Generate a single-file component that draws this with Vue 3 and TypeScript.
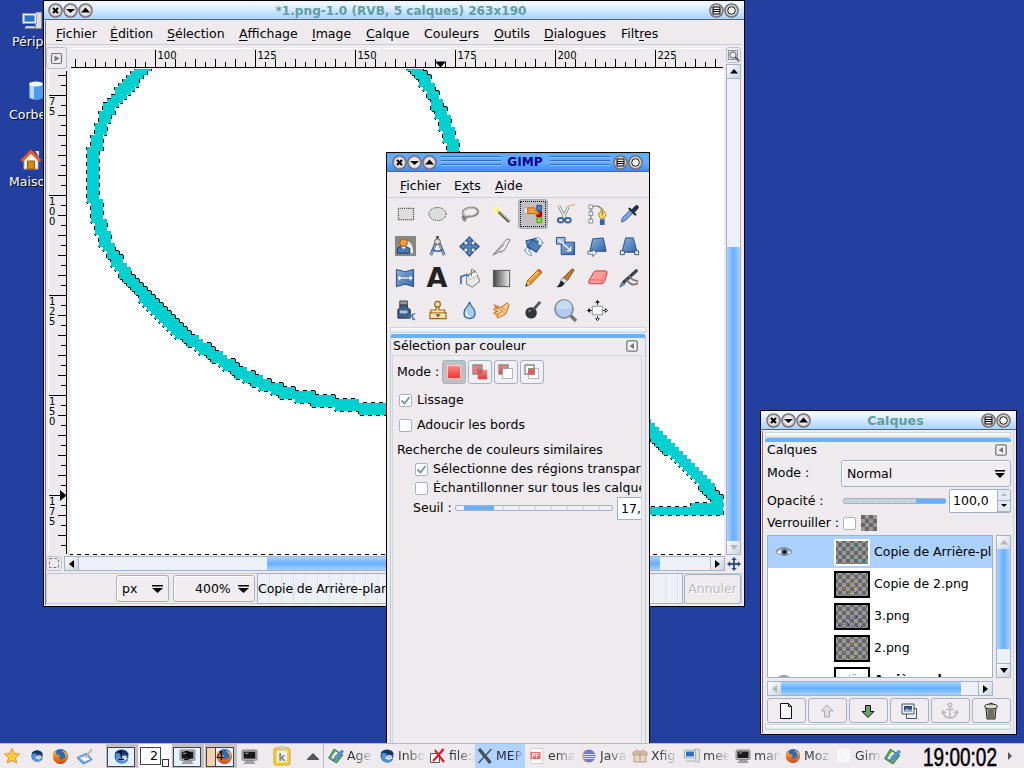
<script setup lang="ts">
type Pt = [number, number]

const menus: [string, string, string][] = [
  ['', 'F', 'ichier'], ['', 'É', 'dition'], ['', 'S', 'élection'], ['', 'A', 'ffichage'], ['', 'I', 'mage'],
  ['', 'C', 'alque'], ['Coule', 'u', 'rs'], ['', 'O', 'utils'], ['', 'D', 'ialogues'], ['Filt', 'r', 'es'],
]
const toolMenus: [string, string, string][] = [['', 'F', 'ichier'], ['E', 'x', 'ts'], ['', 'A', 'ide']]

// Ruler ticks, one every 2.5 image pixels at 400 %
const tickLen = (i: number) => (i % 10 === 0 ? 17 : i % 2 === 0 ? 8 : 5)
const hTicks = Array.from({ length: 65 }, (_, k) => {
  const i = k - 8
  return { x: 85 + i * 10, l: tickLen(Math.abs(i)) }
})
const hLabels = [100, 125, 150, 175, 200, 225]
const vTicks = Array.from({ length: 48 }, (_, k) => {
  const i = k - 2
  return { y: 26 + i * 10, l: tickLen(Math.abs(i)) }
})
const vLabels = ['75', '100', '125', '150', '175']

// Canvas drawing: strokes rasterised on the 4px grid of the zoomed image
const X0 = 70
const Y0 = 69
const strokes: Pt[][] = [
  [[150, 62], [141, 72], [128, 86], [115, 100], [106, 115], [100, 131], [95, 150], [93, 170], [93, 185], [95, 200], [99, 220],
   [105, 240], [116, 260], [130, 280], [149, 301], [183, 335], [218, 358], [240, 373], [260, 383], [287, 393], [317, 400],
   [340, 404], [373, 409], [400, 409]],
  [[410, 62], [418, 71], [427, 83], [435, 99], [444, 119], [451, 140], [455, 156]],
  [[640, 421], [650, 430], [660, 440], [680, 459], [700, 479], [717, 499]],
]
function dist(px: number, py: number, a: Pt, b: Pt): number {
  const dx = b[0] - a[0]
  const dy = b[1] - a[1]
  const t = Math.max(0, Math.min(1, ((px - a[0]) * dx + (py - a[1]) * dy) / (dx * dx + dy * dy)))
  return Math.hypot(px - a[0] - t * dx, py - a[1] - t * dy)
}
const cells = new Set<string>()
for (let cx = 67; cx < 724; cx += 4) {
  for (let cy = 67; cy < 556; cy += 4) {
    const mx = cx + 2
    const my = cy + 2
    let on = my > 507 && my < 515 && mx > 640 && mx < 723
    if (my > 503 && my < 507 && mx > 691) on = true
    if (!on) {
      for (const s of strokes) {
        for (let i = 1; i < s.length && !on; i++) if (dist(mx, my, s[i - 1], s[i]) <= 6.1) on = true
      }
    }
    if (on) cells.add(cx + ',' + cy)
  }
}
const has = (x: number, y: number) => cells.has(x + ',' + y)
let fillPath = ''
let antPath = ''
// Marching ants: black where (x - y) mod 8 falls in the first half of the stripe
const ant = (x: number, y: number, phase = 7) => {
  if (((x - y + 8000 + phase) & 7) < 4) antPath += `M${x - X0} ${y - Y0}h1v1h-1z`
}
cells.forEach((k) => {
  const [x, y] = k.split(',').map(Number)
  fillPath += `M${x - X0} ${y - Y0}h4v4h-4z`
  for (let i = 0; i < 4; i++) {
    if (!has(x - 4, y)) ant(x - 1, y + i)
    if (!has(x + 4, y)) ant(x + 4, y + i)
    if (!has(x, y - 4)) ant(x + i, y - 1)
    if (!has(x, y + 4)) ant(x + i, y + 4)
  }
})
for (let x = 70; x < 724; x++) ant(x, 554, 5)

interface Layer { name: string; color: string; dots: number[][]; sel?: boolean; plain?: boolean }
const layers: Layer[] = [
  { name: 'Copie de Arrière-plan', color: '#00c8c8', sel: true, dots: [[17, 7], [20, 7], [14, 9], [11, 13], [12, 16], [15, 18], [22, 10], [21, 9], [25, 22], [28, 21], [30, 22]] },
  { name: 'Copie de 2.png', color: '#e8c800', dots: [[16, 6], [19, 6], [15, 9], [17, 11], [19, 14], [20, 17], [20, 20], [17, 22], [13, 22], [10, 20], [9, 17], [12, 16]] },
  { name: '3.png', color: '#2010e0', dots: [[4, 22], [8, 21], [12, 19], [14, 16], [17, 14], [21, 13], [25, 15], [27, 18], [13, 21], [17, 22], [22, 23], [26, 23]] },
  { name: '2.png', color: '#e8c800', dots: [[19, 6], [16, 9], [19, 9], [17, 12], [20, 15], [20, 18], [19, 21], [16, 22], [12, 23], [10, 20], [9, 17]] },
  { name: 'Arrière-plan', color: '#00c8c8', plain: true, dots: [[14, 8], [18, 7], [20, 7]] },
]
const tasks = [
  { t: 'Age', i: 'i-pad', w: 51 }, { t: 'Inbox', i: 'i-bird', w: 51 }, { t: 'file:/', i: 'i-redx', w: 49 },
  { t: 'MEPI', i: 'i-x', w: 50, on: true }, { t: 'ema', i: 'i-pdf', w: 52 }, { t: 'Java', i: 'i-ecl', w: 51 },
  { t: 'Xfig', i: 'i-gift', w: 52 }, { t: 'mee', i: 'i-pc', w: 51 }, { t: 'man', i: 'i-term', w: 50 },
  { t: 'Moz', i: 'i-fox', w: 51 }, { t: 'Gim', i: 'i-none', w: 50 },
]
</script>

<template>
  <div class="desktop">
    <svg class="defs" width="0" height="0">
      <defs>
        <pattern id="chk" width="8" height="8" patternUnits="userSpaceOnUse"><rect width="8" height="8" fill="#999" /><path d="M0 0h4v4H0zM4 4h4v4H4z" fill="#666" /></pattern>
        <linearGradient id="blue" x1="0" y1="0" x2="1" y2="1"><stop offset="0" stop-color="#8fb4dc" /><stop offset="1" stop-color="#3465a4" /></linearGradient>
        <linearGradient id="grey" x1="0" y1="0" x2="1" y2="0"><stop offset="0" stop-color="#444" /><stop offset="1" stop-color="#eee" /></linearGradient>
        <linearGradient id="red" x1="0" y1="0" x2="0" y2="1"><stop offset="0" stop-color="#ff8a8a" /><stop offset="1" stop-color="#f43030" /></linearGradient>
        <linearGradient id="org" x1="0" y1="0" x2="0" y2="1"><stop offset="0" stop-color="#ffb030" /><stop offset="1" stop-color="#d84a08" /></linearGradient>
        <radialGradient id="orb"><stop offset="0" stop-color="#fff" /><stop offset=".65" stop-color="#e4e2e4" /><stop offset="1" stop-color="#a09a9e" /></radialGradient>
      </defs>
      <symbol id="b-x" viewBox="0 0 15 15"><circle cx="7.5" cy="7.5" r="6.7" fill="url(#orb)" stroke="#6b6468" stroke-width="1.1" /><path d="M5 5l5 5M10 5l-5 5" stroke="#000" stroke-width="2.2" /></symbol>
      <symbol id="b-d" viewBox="0 0 15 15"><circle cx="7.5" cy="7.5" r="6.7" fill="url(#orb)" stroke="#6b6468" stroke-width="1.1" /><path d="M3 6h9l-4.500 4z" /></symbol>
      <symbol id="b-u" viewBox="0 0 15 15"><circle cx="7.5" cy="7.5" r="6.7" fill="url(#orb)" stroke="#6b6468" stroke-width="1.1" /><path d="M3 9.500h9l-4.500-5z" /></symbol>
      <symbol id="b-m" viewBox="0 0 15 15"><circle cx="7.5" cy="7.5" r="6.7" fill="url(#orb)" stroke="#6b6468" stroke-width="1.1" /><path d="M4 4h7v7H4zM4 6.500h7M4 8.500h7" fill="none" stroke="#000" /></symbol>
      <symbol id="b-o" viewBox="0 0 15 15"><circle cx="7.5" cy="7.5" r="6.7" fill="url(#orb)" stroke="#6b6468" stroke-width="1.1" /><circle cx="7.5" cy="7.500" r="3.800" fill="#fff" stroke="#111" /></symbol>
      <symbol id="i-tab" viewBox="0 0 12 12"><rect x=".8" y=".8" width="10.400" height="10.400" rx="1.500" fill="#f6f4f6" stroke="#777" stroke-width="1.300" /><path d="M8 3v6L3.500 6z" fill="#777" /></symbol>
      <symbol id="i-move" viewBox="0 0 20 20"><path d="M10 0.700l3.600 4h-2.100v3.800h3.800V6.400l4 3.600-4 3.600v-2.100h-3.800v3.800h2.100L10 19.300l-3.600-4h2.100v-3.800H4.700v2.100L.7 10l4-3.600v2.100h3.800V4.700H6.400z" fill="#5e8cc4" stroke="#204a87" /></symbol>
      <symbol id="i-movedark" viewBox="0 0 15 15"><path d="M7.500 0l3 3.300h-2v3.200h3.200v-2L15 7.500l-3.300 3v-2H8.500v3.200h2l-3 3.300-3-3.300h2V8.500H3.300v2L0 7.500l3.300-3v2h3.200V3.300h-2z" fill="#2c4f8c" /></symbol>
      <symbol id="i-bird" viewBox="0 0 16 16"><circle cx="8" cy="8" r="6.500" fill="#2b5ba4" /><path d="M2 4Q7 0 13 3l2 3-3 1Q6 3 3 9z" fill="#163468" /><path d="M3 5Q8 4 8 10l4 2 2-3v3q-3 4-8 2-5-3-3-9" fill="#4f93d8" /><path d="M7 8l5-1 1.500 3-3 2-4-1.500z" fill="#f2ead8" /><path d="M7.500 8.500l3 1.500 1.500-2" fill="none" stroke="#8b8171" stroke-width=".7" /></symbol>
      <symbol id="i-fox" viewBox="0 0 16 16"><circle cx="8" cy="8" r="7" fill="#3068b8" /><path d="M1.500 3Q0 8 2 12q5 5 10 1.500 4-4 2.500-9L13 3q1 4-1 6-3 3-5.500.500L8 8 6 6 4 6 4 4z" fill="url(#org)" /><path d="M10 3q3 1 3 4" stroke="#ffd040" fill="none" /></symbol>
      <symbol id="i-term" viewBox="0 0 16 16"><rect x="1" y="2" width="14" height="9.500" rx="1" fill="#bbb" stroke="#888" /><rect x="2.500" y="3.500" width="11" height="6.500" fill="#181818" /><path d="M5 12h6l2 2.500H3z" fill="#aaa" stroke="#777" stroke-width=".6" /><path d="M4 5h3" stroke="#ddd" stroke-width=".8" /></symbol>
      <symbol id="i-pc" viewBox="0 0 16 16"><rect x="11" y="1" width="4.500" height="13" fill="#ddd" stroke="#999" stroke-width=".6" /><rect x=".5" y="2" width="11" height="8" fill="#eee" stroke="#999" stroke-width=".7" /><rect x="2" y="3.500" width="8" height="5" fill="#2a6fc8" /><path d="M3 12h7l1 2H2z" fill="#ccc" /></symbol>
      <symbol id="i-pad" viewBox="0 0 16 16"><path d="M.5 10L6 1l9 6-6.500 8z" fill="#5bab63" stroke="#23703b" stroke-width=".8" /><path d="M3.500 9.500l4-6 4.500 3-4.500 6z" fill="#fff" /><path d="M5 13l2-5 7-6 1.500 1.700L8.500 11z" fill="#5a97dc" stroke="#285c9c" stroke-width=".6" /></symbol>
      <symbol id="i-redx" viewBox="0 0 16 16"><path d="M.5 5.500h9v9h-9z" fill="#fff" stroke="#555" /><path d="M3 13Q8 8 13.500 1M5 2q4 6 9 12" stroke="#e01820" stroke-width="2.200" fill="none" /></symbol>
      <symbol id="i-x" viewBox="0 0 16 16"><path d="M2 1L13.500 15" stroke="#454f5a" stroke-width="3.400" /><path d="M14.500 1L1.500 15" stroke="#454f5a" stroke-width="1.300" /></symbol>
      <symbol id="i-pdf" viewBox="0 0 16 16"><path d="M2 .5h12v15H2z" fill="#fff" stroke="#dcc" /><path d="M1.500 4h10v7h-10z" fill="#e76d6d" /><path d="M3.500 9.500V5.500h2.500v2H4m3.500 2v-4H10M7.500 7.500h2" stroke="#fff" fill="none" /></symbol>
      <symbol id="i-ecl" viewBox="0 0 16 16"><circle cx="8" cy="8" r="6.500" fill="#7779c5" /><path d="M2 6.500h12M1.500 8.500h13M2 10.500h12" stroke="#d6d8f5" /><path d="M4 2q-4 6 0 12" stroke="#eda35a" fill="none" /></symbol>
      <symbol id="i-gift" viewBox="0 0 16 16"><path d="M2 6h12v8H2zM1 4h14v3H1z" fill="#e4d8c4" stroke="#b7a08a" /><path d="M8 4v10M8 4Q3 0 4 4M8 4q5-4 4 0" stroke="#d88" fill="none" /></symbol>
      <symbol id="i-none" viewBox="0 0 16 16"><rect x="1" y="1" width="13" height="13" fill="#f8f7f8" /><path d="M4 4l1 1M8 10l1 1" stroke="#b8e6e6" /></symbol>
      <symbol id="i-house" viewBox="0 0 22 22"><path d="M4 11v9h14v-9l-7-7z" fill="#fff6e4" stroke="#c9a88a" /><path d="M1.500 12L11 2.500 20.500 12" fill="none" stroke="#ef5326" stroke-width="3" /><path d="M15 2h4v6z" fill="#ddd" /><path d="M7.500 12h7v8h-7z" fill="#d88b12" stroke="#8c5a10" /></symbol>
      <symbol id="i-eye" viewBox="0 0 18 12"><path d="M1 6.500Q8-1 17 6.500 9 12 1 6.500z" fill="#fff" stroke="#8b8b8b" /><circle cx="9.500" cy="6" r="3.500" fill="#527daf" /><circle cx="9.500" cy="6" r="1.800" fill="#111" /><path d="M1 5Q8-2 17 5" stroke="#777" fill="none" /></symbol>
    </svg>

    <div class="shortcut s1"><svg width="22" height="20"><use href="#i-pc" /></svg><span>Périphériques</span></div>
    <div class="shortcut s2"><svg width="18" height="22" viewBox="0 0 18 22"><path d="M2 4v14q7 4 14 0V4z" fill="#4d9af0" /><path d="M3 5v13l4 1V6z" fill="#b8dcff" /><ellipse cx="9" cy="4" rx="7" ry="2.500" fill="#eef7ff" /></svg><span>Corbeille</span></div>
    <div class="shortcut s3"><svg width="22" height="22"><use href="#i-house" /></svg><span>Maison</span></div>

    <!-- Image window -->
    <section class="win image-win">
      <header class="title pale">
        <svg v-for="b in ['x', 'd', 'u']" :key="b" width="15" height="15"><use :href="'#b-' + b" /></svg>
        <h1>*1.png-1.0 (RVB, 5 calques) 263x190</h1>
        <svg v-for="b in ['m', 'o']" :key="b" width="15" height="15"><use :href="'#b-' + b" /></svg>
      </header>
      <div class="image-body">
        <nav class="menubar"><span v-for="m in menus" :key="m[2]">{{ m[0] }}<u>{{ m[1] }}</u>{{ m[2] }}</span></nav>
        <div class="work">
          <div class="corner"><svg width="20" height="21" viewBox="0 0 20 21"><rect x="4.500" y="5.500" width="10" height="10" rx="1.500" fill="none" stroke="#777" stroke-width="1.200" /><path d="M7.500 7.500v6l5-3z" fill="#777" /></svg></div>
          <svg class="hruler" width="654" height="22">
            <rect x="1" y="2" width="652" height="18" fill="#eeeaee" /><path d="M1 1.500h652" stroke="#fff" />
            <g class="px"><rect v-for="t in hTicks" :key="t.x" :x="t.x" :y="20 - t.l" width="1" :height="t.l" /><rect x="1" y="20" width="652" height="1" /></g>
            <text v-for="(l, i) in hLabels" :key="l" :x="87.500 + i * 100" y="12">{{ l }}</text>
            <path d="M365 14.500h11l-5.500 6z" />
          </svg>
          <div class="zoombtn"><svg width="13" height="13" viewBox="0 0 13 13"><path d="M1.500 1.500h9v9h-9z" fill="none" stroke="#336" stroke-dasharray="1 1" /><circle cx="6" cy="6" r="3" fill="#eee" stroke="#888" stroke-width="1.300" /><path d="M8 8l4 4" stroke="#666" stroke-width="2" /></svg></div>

          <svg class="vruler" width="24" height="486">
            <path d="M2.500 1v484" stroke="#fff" />
            <g class="px"><rect v-for="t in vTicks" :key="t.y" :x="20 - t.l" :y="t.y" :width="t.l" height="1" /><rect x="20" y="2" width="1" height="483" /></g>
            <g v-for="(l, i) in vLabels" :key="l"><text v-for="(c, j) in l.split('')" :key="j" x="3" :y="36 + i * 100 + j * 10">{{ c }}</text></g>
            <path d="M14 421v11l6.500-5.500z" />
          </svg>
          <svg class="canvas px" width="654" height="486"><rect width="654" height="486" fill="#fff" /><path :d="fillPath" fill="#00d0d0" /><path :d="antPath" /></svg>
          <div class="sb v">
            <i class="ar"><svg width="8" height="5"><path d="M0 4.500h8L4 0z" /></svg></i><b class="trough" /><b class="thumb" /><i class="ar off"><svg width="8" height="5"><path d="M0 0h8L4 5z" /></svg></i>
          </div>
          <div class="hrow">
            <div class="qmask"><svg width="11" height="11"><path d="M.5.500h9v9h-9z" fill="none" stroke="#777" stroke-dasharray="3 2" /></svg></div>
            <div class="sb h main">
              <i class="ar"><svg width="5" height="8"><path d="M5 0v8L0 4z" /></svg></i><b class="trough a" /><b class="thumb" /><b class="trough c" /><i class="ar"><svg width="5" height="8"><path d="M0 0v8l5-4z" /></svg></i>
            </div>
            <svg width="14" height="14"><use href="#i-movedark" /></svg>
          </div>
        </div>
        <footer class="status">
          <div class="combo px-unit"><span>px</span><svg width="11" height="8"><path d="M0 0h11v1.500H0zM0 3h11L5.500 8z" /></svg></div>
          <div class="combo pct"><span>400%</span><svg width="11" height="8"><path d="M0 0h11v1.500H0zM0 3h11L5.500 8z" /></svg></div>
          <div class="progress">Copie de Arrière-plan (1,3 Mo)</div>
          <div class="cancel">Annuler</div>
        </footer>
      </div>
    </section>

    <!-- Toolbox window -->
    <section class="win tool-win">
      <header class="title active">
        <svg v-for="b in ['x', 'd', 'u']" :key="b" width="15" height="15"><use :href="'#b-' + b" /></svg>
        <em /><h1>GIMP</h1><em />
        <svg v-for="b in ['m', 'o']" :key="b" width="15" height="15"><use :href="'#b-' + b" /></svg>
      </header>
      <nav class="menubar tm"><span v-for="m in toolMenus" :key="m[2]">{{ m[0] }}<u>{{ m[1] }}</u>{{ m[2] }}</span></nav>
      <div class="tools">
        <i><svg viewBox="0 0 22 22"><rect x="3.500" y="4.500" width="16" height="12" fill="#dcdedc" stroke="#111" stroke-dasharray="1 1" /></svg></i>
        <i><svg viewBox="0 0 22 22"><ellipse cx="11" cy="10.500" rx="9" ry="6.800" fill="#dcdedc" stroke="#222" stroke-dasharray="1 1" /></svg></i>
        <i><svg viewBox="0 0 22 22"><path d="M6 13Q1 7 9 4.500t11 3Q20 12 12 13t-7-1q-2 4 2 6" fill="none" stroke="#888a85" stroke-width="2.200" /><path d="M6 13Q2 7 9 4.800t10 2.700Q18 11 12 12.500" fill="none" stroke="#ddd" stroke-width=".8" /><path d="M3 13l5 3" stroke="#777" stroke-width="2" /></svg></i>
        <i><svg viewBox="0 0 22 22"><circle cx="6.500" cy="6.500" r="4.500" fill="#fff8b8" /><path d="M7 7l12 11.500" stroke="#555" stroke-width="3" /><path d="M8 7l11 10.500" stroke="#c8caa0" stroke-width="1.200" /><path d="M5 5.500l3 3" stroke="#fdf08a" stroke-width="3" /></svg></i>
        <i class="on"><svg viewBox="0 0 22 22"><path d="M14.500 1.500h5v5h-5z" fill="#5c82b4" stroke="#204a87" /><path d="M14.500 8h5v5h-5z" fill="#d40000" stroke="#800" /><path d="M14.500 14.500h5v5h-5z" fill="#8ae234" stroke="#4e9a06" /><path d="M1 4h4v6H1z" fill="#eee" stroke="#999" stroke-width=".8" /><path d="M5 4l7 0 1 3 4 2-1 2-5-1-6 0z" fill="#f7a040" stroke="#ce5c00" /></svg></i>
        <i><svg viewBox="0 0 22 22"><path d="M4 2l7 13M14 3L8 15" stroke="#888a85" stroke-width="3" /><path d="M4 2l7 13M14 3L8 15" stroke="#fff" stroke-width="1.200" /><ellipse cx="6" cy="17" rx="3" ry="2.300" fill="none" stroke="#3465a4" stroke-width="2" /><ellipse cx="13.500" cy="17" rx="3" ry="2.300" fill="none" stroke="#3465a4" stroke-width="2" /><path d="M14 3q1-2 3-2h4" fill="none" stroke="#d08000" stroke-dasharray="2 1" /></svg></i>
        <i><svg viewBox="0 0 22 22"><path d="M4 3v16M4 3q10-3 12 4" fill="none" stroke="#777" stroke-width="1.200" /><path d="M2 1h4v4H2zM2 8h4v4H2zM2 16h4v4H2z" fill="#fff" stroke="#888" /><path d="M16 5l4 6-2 4h-4l-2-4z" fill="#fbe07a" stroke="#b58900" /><path d="M16 7v5" stroke="#555" /><path d="M13.500 16h5v6h-5z" fill="#3465a4" /></svg></i>
        <i><svg viewBox="0 0 22 22"><path d="M3 19q-1-3 1-5L12 6l3 3-8 8q-2 1-4 2z" fill="#7ba7dc" stroke="#3a6296" /><path d="M11 5l6 6" stroke="#222e3d" stroke-width="2.500" stroke-linecap="round" /><path d="M15 7l3.500-3.500" stroke="#222e3d" stroke-width="4.500" stroke-linecap="round" /></svg></i>

        <i><svg viewBox="0 0 22 22"><rect width="22" height="21" fill="#888882" /><path d="M12 5q7 1 7 13h-7z" fill="#eee" /><path d="M2.500 18v-5q2-2 6-2t7 2v5z" fill="#4a7ab8" stroke="#17335a" /><path d="M6 11l3 3 3-3z" fill="#eee" /><circle cx="9" cy="7" r="4" fill="#f39a3c" stroke="#a8560c" /></svg></i>
        <i><svg viewBox="0 0 22 22"><circle cx="11" cy="6" r="3" fill="#ddd" stroke="#555" /><path d="M11 0v3M9 8L4 20M13 8l5 12" stroke="#555" stroke-width="3" /><path d="M9 9L4 20M13 9l5 11" stroke="#8fb4dc" stroke-width="1.500" /><path d="M5 14q6 4 12 0" fill="none" stroke="#3465a4" stroke-width="1.500" /></svg></i>
        <i><svg viewBox="0 0 20 20"><use href="#i-move" /></svg></i>
        <i><svg viewBox="0 0 22 22"><path d="M2 20L17 3l3 1-6 11-6 2z" fill="#eee" stroke="#777" /><path d="M2 20L14 9" stroke="#777" /><path d="M7 15l5 3" stroke="#999" /></svg></i>
        <i><svg viewBox="0 0 22 22"><path d="M4 3.500h12v9H4z" transform="rotate(-14 10 8)" fill="#6f9ad0" stroke="#204a87" /><path d="M6 6h11v9H6z" transform="rotate(35 12 11)" fill="#4f7db8" stroke="#204a87" /><path d="M1 15l3.500-3 3.500 3H6q0 3 3 3.500v2Q3 20 3 15z" fill="#fff" stroke="#3b6daa" stroke-width=".7" /><path d="M21.500 7L18 10l-3.500-3h2q0-3-3-3.500v-2q6 .5 6 5.500z" fill="#fff" stroke="#3b6daa" stroke-width=".7" /></svg></i>
        <i><svg viewBox="0 0 22 22"><path d="M6.500 6.500h14v13h-14z" fill="url(#blue)" stroke="#204a87" /><path d="M1.500 1.500h9v7h-9z" fill="#9fc0e8" stroke="#204a87" /><path d="M4 4l12 11M12 15.500h4.500V11" fill="none" stroke="#fff" stroke-width="1.300" /></svg></i>
        <i><svg viewBox="0 0 22 22"><path d="M6 3l11-1 3 14H3z" fill="url(#blue)" stroke="#204a87" /><path d="M1 16h5v-2.500l4 4-4 4V19H1z" fill="#fff" stroke="#204a87" stroke-width=".8" /></svg></i>
        <i><svg viewBox="0 0 22 22"><path d="M7 2h8l4 15H3z" fill="url(#blue)" stroke="#204a87" /><path d="M1.500 15.500h4v4h-4zM16.500 15.500h4v4h-4z" fill="#fff" stroke="#204a87" /></svg></i>

        <i><svg viewBox="0 0 22 22"><path d="M1.500 1.500l9 2.500 9-2.500v18l-9-2.500-9 2.500z" fill="url(#blue)" stroke="#204a87" /><path d="M2 10.500l4-4v3h9v-3l4 4-4 4v-3H6v3z" fill="#fff" stroke="#3465a4" stroke-width=".6" /></svg></i>
        <i><span class="biga">A</span></i>
        <i><svg viewBox="0 0 22 22"><path d="M8 8l9-5 5 11-8 6-6-3z" fill="#e8e8e8" stroke="#777" /><path d="M9 8l8-4 3 3-8 5z" fill="#fff" stroke="#999" stroke-width=".7" /><path d="M2 17V9l6-2 3 1" fill="none" stroke="#4a7ab4" stroke-width="2" /><path d="M13 1v8M13 2q3-2 3 3" fill="none" stroke="#777" /></svg></i>
        <i><svg viewBox="0 0 22 22"><rect x="2.500" y="2.500" width="17" height="17" fill="url(#grey)" stroke="#555" /></svg></i>
        <i><svg viewBox="0 0 22 22"><path d="M3 19l2-6L16 1.500l3.500 3.500L8 17z" fill="#e9a22f" stroke="#8f5902" /><path d="M15 2.500L17 1l3 3-1.500 1.500z" fill="#ee4040" /><path d="M3 19l2-6 3 4z" fill="#f5dfb5" stroke="#8f5902" stroke-width=".6" /><path d="M3 19l.8-2.500 1.200 1.500z" /><path d="M6 13L16 3" stroke="#fcd88a" /></svg></i>
        <i><svg viewBox="0 0 22 22"><path d="M9 10l9-9 2 1-7 11z" fill="#c67c2c" stroke="#7a4608" /><path d="M8 10l5 3-3 3-4-3z" fill="#ddd" stroke="#777" stroke-width=".7" /><path d="M6 13l4 3q-2 5-9 4 3-1 5-7z" fill="#222" /></svg></i>
        <i><svg viewBox="0 0 22 22"><path d="M7 4.500Q8 3 10 3h9q2.500 0 2 2.500L18.500 14q-1 2.500-3 2.500H3.500Q1 16.500 2 13.500z" fill="#f4a0a0" stroke="#c83838" /><path d="M2 12.500h12q1.500 0 2-1.500l4.500-7M15 12.500l1 3.500" fill="none" stroke="#e86464" /></svg></i>
        <i><svg viewBox="0 0 22 22"><path d="M5 15L18 3" stroke="#3f4444" stroke-width="3.500" stroke-linecap="round" /><path d="M10 8l4 4 6 2M8 12q5 8 12 4" fill="none" stroke="#777" stroke-width="1.800" /><path d="M1 20l2-5 3 2z" fill="#7da7dc" stroke="#3465a4" /></svg></i>

        <i><svg viewBox="0 0 22 22"><path d="M5 5h8v3l3 2v9H3v-9l2-2z" fill="#415f86" stroke="#263447" /><path d="M5 1h8v4H5z" fill="#999" stroke="#444" /><path d="M5 11h8v3H5z" fill="#a9c4e6" /><path d="M14 19l7-5M15 15l6 6M18 14l1 7" stroke="#4a7ab4" stroke-width="1.300" /></svg></i>
        <i><svg viewBox="0 0 22 22"><circle cx="11" cy="4.500" r="3" fill="#fce2a8" stroke="#9b6612" stroke-width="1.300" /><path d="M9.500 7.500h3v3h6v3h1.500v6H3v-6h1v-3h5.500z" fill="#fce2a8" stroke="#9b6612" stroke-width="1.200" /><path d="M4 13.500h14" stroke="#9b6612" /><path d="M9 15h5l-2.500 3z" fill="#553" /></svg></i>
        <i><svg viewBox="0 0 22 22"><path d="M11 2q1 4 5 8 3 9-5 9.500Q3 19 6 10q4-4 5-8z" fill="#a8cbf0" stroke="#3465a4" stroke-width="1.200" /><path d="M8 12q-1 5 3 5.500" fill="none" stroke="#fff" stroke-width="1.400" /></svg></i>
        <i><svg viewBox="0 0 22 22"><path d="M3 5l7 3 7-5 2 2-2 6q-1 5-6 6l-4 2-1-2 2-2-4 0-1-2 4-1-4-2 1-2 4 1-4-3z" fill="#f9c990" stroke="#b06a14" /><path d="M9 9l4 4M11 7l4 4M8 14l4-2" stroke="#b06a14" fill="none" stroke-width=".8" /></svg></i>
        <i><svg viewBox="0 0 22 22"><circle cx="8.500" cy="13.500" r="6" fill="#333" /><path d="M11 10l7-8" stroke="#555" stroke-width="3" /><circle cx="7" cy="11.500" r="1.500" fill="#777" /></svg></i>
        <i><svg class="mag" viewBox="0 0 24 24"><path d="M17 17l6 6" stroke="#777" stroke-width="3.500" /><circle cx="11" cy="11" r="9" fill="#b0cdf0" stroke="#8a9299" stroke-width="1.800" /><path d="M3 10q8 3 16-1 0-6-8-7-8 2-8 8" fill="#cfe2f7" opacity=".7" /></svg></i>
        <i><svg viewBox="0 0 22 22"><path d="M5.500 6.500h11v9h-11z" fill="#f8f8f8" stroke="#888" /><path d="M11 0l2.500 3h-5zM11 22l2.500-3h-5zM0 11l3-2.500v5zM22 11l-3-2.500v5zM10.500 1h1v4h-1zM10.500 17h1v4h-1zM1 10.500h4v1H1zM17 10.500h4v1h-4z" /></svg></i>
      </div>
      <div class="handle" />
      <div class="dock">
        <div class="dock-title"><span>Sélection par couleur</span><svg width="12" height="12"><use href="#i-tab" /></svg></div>
        <div class="opts">
          <div class="modes"><span>Mode :</span>
            <i class="on"><svg width="16" height="16"><path d="M1.500 1.500h13v13h-13z" fill="url(#red)" stroke="#fff" stroke-dasharray="1 1" /></svg></i>
            <i><svg width="16" height="16"><path d="M5.500 5.500h10v10h-10z" fill="url(#red)" stroke="#fff" stroke-dasharray="1 1" /><path d="M1 1h9v9H1z" fill="#f77" stroke="#888" stroke-width="1.300" /><path d="M5 5h5v5H5z" fill="#f44" stroke="#888" /></svg></i>
            <i><svg width="16" height="16"><path d="M1 1h9v9H1z" fill="url(#red)" stroke="#888" stroke-width="1.300" /><path d="M4.500 4.500h10v10h-10z" fill="#fff" stroke="#777" stroke-dasharray="1 1" /></svg></i>
            <i><svg width="16" height="16"><path d="M1 1h9v9H1z" fill="#fff" stroke="#888" stroke-width="1.300" /><path d="M4.500 4.500h10v10h-10z" fill="#fff" stroke="#777" stroke-dasharray="1 1" /><path d="M4.500 4.500h6v6h-6z" fill="#f55" stroke="#888" /></svg></i>
          </div>
          <div class="opt o1"><i class="cb"><svg width="11" height="11"><path d="M1.500 5.500l3 3L9.500 2" /></svg></i>Lissage</div>
          <div class="opt o2"><i class="cb" />Adoucir les bords</div>
          <div class="opt o3">Recherche de couleurs similaires</div>
          <div class="opt o4"><i class="cb"><svg width="11" height="11"><path d="M1.500 5.500l3 3L9.500 2" /></svg></i>Sélectionne des régions transparentes</div>
          <div class="opt o5"><i class="cb" />Échantillonner sur tous les calques</div>
          <div class="opt o6"><span>Seuil :</span><b class="slider"><b class="knob" /></b><b class="entry">17,0</b></div>
        </div>
      </div>
    </section>

    <!-- Layers window -->
    <section class="win layer-win">
      <header class="title pale">
        <svg v-for="b in ['x', 'd', 'u']" :key="b" width="15" height="15"><use :href="'#b-' + b" /></svg>
        <h1>Calques</h1>
        <svg v-for="b in ['m', 'o']" :key="b" width="15" height="15"><use :href="'#b-' + b" /></svg>
      </header>
      <div class="layer-body">
        <div class="handle" />
        <div class="bar" />
        <div class="lr r0"><span>Calques</span><svg width="12" height="12"><use href="#i-tab" /></svg></div>
        <div class="lr r1"><span>Mode :</span><div class="combo wide"><span>Normal</span><svg width="10" height="8"><path d="M0 0h10v1.500H0zM0 3h10L5 8z" /></svg></div></div>
        <div class="lr r2"><span>Opacité :</span><b class="slider full"><b class="knob" /></b><div class="spin"><b>100,0</b><em><i class="off"><svg width="6" height="3"><path d="M0 3h6L3 0z" /></svg></i><i><svg width="6" height="3"><path d="M0 0h6L3 3z" /></svg></i></em></div></div>
        <div class="lr r3"><span>Verrouiller :</span><i class="cb" /><svg width="16" height="16"><rect width="16" height="16" fill="url(#chk)" /></svg></div>
        <div class="listrow">
          <div class="list">
            <div v-for="l in layers" :key="l.name" class="layer" :class="{ sel: l.sel, bold: l.plain }">
              <div class="eye"><svg v-if="l.sel || l.plain" width="18" height="12"><use href="#i-eye" /></svg></div>
              <svg class="thumb-img px" width="36" height="27">
                <rect width="36" height="27" :fill="l.sel ? '#fff' : '#000'" /><rect x="2" y="2" width="32" height="23" :fill="l.plain ? '#fff' : 'url(#chk)'" />
                <rect v-for="(d, i) in l.dots" :key="i" :x="d[0] + 1" :y="d[1]" width="1" height="1" :fill="l.color" />
              </svg>
              <span>{{ l.name }}</span>
            </div>
          </div>
          <div class="sb v ls">
            <i class="ar off"><svg width="8" height="5"><path d="M0 4.500h8L4 0z" /></svg></i><b class="thumb" /><b class="trough" /><i class="ar"><svg width="8" height="5"><path d="M0 0h8L4 5z" /></svg></i>
          </div>
        </div>
        <div class="sb h lh">
          <i class="ar off"><svg width="5" height="8"><path d="M5 0v8L0 4z" /></svg></i><b class="thumb" /><b class="trough" /><i class="ar"><svg width="5" height="8"><path d="M0 0v8l5-4z" /></svg></i>
        </div>
        <div class="lbtns">
          <i><svg width="18" height="18"><path d="M3.500 1.500h8l3 3v12h-11z" fill="#fafafa" stroke="#111" /><path d="M11.500 1.500v3h3" fill="none" stroke="#111" /></svg></i>
          <i><svg width="18" height="18"><path d="M9 3l6 6h-3.500v6h-5V9H3z" fill="#ddd" stroke="#aaa" /></svg></i>
          <i><svg width="18" height="18"><path d="M9 15.500l6-6h-3.500v-6h-5v6H3z" fill="#6fa06f" stroke="#111" /></svg></i>
          <i><svg width="18" height="18"><path d="M6.500 6.500h10v10h-10z" fill="#eee" stroke="#456" /><path d="M2 2h12v10H2z" fill="#eee" stroke="#456" /><path d="M4 4h8v6H4z" fill="#2c4f80" /><path d="M4 9l3-3 2 2 2-1 1 2v1H4z" fill="#9db4d0" /></svg></i>
          <i><svg width="18" height="18"><circle cx="9" cy="3" r="1.800" fill="none" stroke="#bbb" stroke-width="1.500" /><path d="M9 5v11M5 7.500h8M2 10q1 6 7 6t7-6M1 12l1-3 3 2M17 12l-1-3-3 2" fill="none" stroke="#bbb" stroke-width="1.600" /></svg></i>
          <i><svg width="18" height="18"><path d="M4 6h10l-1 11H5z" fill="#aaa89a" stroke="#222" /><path d="M7 8v8M9 8v8M11 8v8" stroke="#333" /><ellipse cx="9" cy="4.500" rx="6.500" ry="2.500" fill="#d9d8cc" stroke="#222" /><path d="M7 2q2-2 4 0" stroke="#222" fill="none" /></svg></i>
        </div>
        <div class="handle" />
      </div>
    </section>

    <footer class="panel">
      <div class="quick">
        <svg width="16" height="16"><path d="M8 .5l2.200 5 5.300.500-4 3.700 1.200 5.300L8 12.200 3.300 15l1.200-5.300-4-3.700L5.800 5.500z" fill="#ffcb3a" stroke="#e8912c" /></svg>
        <svg width="14" height="14"><use href="#i-bird" /></svg>
        <svg width="17" height="17"><use href="#i-fox" /></svg>
        <svg width="17" height="17" viewBox="0 0 16 16"><path d="M0 9l9-4 5 6-8 4z" fill="#7eb4f0" stroke="#4b86c9" /><path d="M3 9.500l6-2.500 3 3.500-5 2z" fill="#fff" /><path d="M8 9l6-8" stroke="#b8b8b8" stroke-width="2" /></svg>
      </div>
      <div class="pager">
        <div class="pg"><div class="mini"><svg width="17" height="17"><use href="#i-bird" /></svg></div><b>1</b></div>
        <div class="pg cur"><div class="mini m2" /><b>2</b><u class="m3" /></div>
        <div class="pg"><div class="mini"><svg width="17" height="17"><use href="#i-term" /></svg></div><b>3</b></div>
        <div class="pg"><div class="mini m4"><svg width="17" height="17"><use href="#i-fox" /></svg></div><b>4</b></div>
      </div>
      <svg class="trm" width="17" height="17"><use href="#i-term" /></svg>
      <svg class="klip" width="18" height="20"><rect x="1" y="2" width="16" height="17" rx="2" fill="#f2cd4e" stroke="#d2a627" /><path d="M4 5h10v11H4z" fill="#f8f6ee" /><path d="M5.500 0h7v4h-7z" fill="#ccc" /><text x="9" y="15" class="k">k</text></svg>
      <svg class="up" width="14" height="9"><path d="M1 7l6-6 6 6v1H1z" fill="#555" /></svg>
      <div class="tasks">
        <div v-for="t in tasks" :key="t.t" class="task" :class="{ on: t.on }" :style="{ width: t.w + 'px' }"><svg width="16" height="16"><use :href="'#' + t.i" /></svg><span>{{ t.t }}</span></div>
      </div>
      <svg class="tray" width="17" height="17"><use href="#i-pad" /></svg>
      <svg class="clock" width="78" height="24"><text x="1" y="21.500" textLength="74" lengthAdjust="spacingAndGlyphs">19:00:02</text></svg>
      <svg class="hide" width="5" height="8"><path d="M0 0v8l4-4z" fill="#555" /></svg>
    </footer>
  </div>
</template>

<style>
html, body { margin: 0; overflow: hidden; }
</style>

<style scoped>
* { box-sizing: border-box; }
.desktop { position: relative; width: 1024px; height: 768px; background: #2340a0; overflow: hidden; font: 12.5px/16px "DejaVu Sans", sans-serif; color: #000; }
.desktop i, .desktop em { font-style: normal; }
.desktop b { font-weight: normal; display: block; }
.defs { position: absolute; }
svg { display: block; flex: none; }
.px { shape-rendering: crispEdges; }
.shortcut { position: absolute; color: #fff; text-shadow: 1px 1px 1px #000; white-space: nowrap; }
.shortcut svg { margin: 0 0 1px 20px; }
.s1 { left: 12px; top: 11px; }
.s1 svg { margin: 0 0 3px 9px; }
.s2 { left: 9px; top: 80px; }
.s2 svg { margin: 0 0 5px 18px; }
.s3 { left: 9px; top: 149px; }
.s3 svg { margin: 0 0 3px 11px; }
.win { position: absolute; border: 1px solid #000; background: #eeeaee; overflow: hidden; }
.title { display: flex; align-items: center; height: 18px; padding: 0 4px; border-bottom: 1px solid #567; }
.title h1 { flex: 1; margin: 0; text-align: center; font-size: 12.1px; line-height: 16px; font-weight: bold; white-space: nowrap; }
.pale { background: linear-gradient(#e8f3ff, #f0f8ff 15%, #a9d3fc); }
.pale h1 { color: #5f9ea0; }
.active { background: linear-gradient(#5fa9fd, #66aeff 50%, #3b8ef0); }
.active h1 { flex: none; width: 42px; color: #000090; }
.active em { flex: 1; height: 12px; margin: 0 3px 0 4px; background: repeating-linear-gradient(#2c6fc9 0 1px, #8fc4ff 1px 2px, transparent 2px 4px); }

.image-win { left: 43px; top: 0; width: 702px; height: 607px; }
.image-win .title { height: 19px; padding: 0 5px 0 4px; }
.image-win h1 { padding-top: 1px; }
.image-body { margin: 1px 2px 2px 1px; border-left: 1px solid #777; height: 584px; display: flex; flex-direction: column; }
.menubar { display: grid; flex: none; grid-template-columns: 54px 57px 72px 73px 54px 58px 70px 50px 77px auto; height: 24px; padding: 1px 0 0 10px; align-items: center; border-bottom: 1px solid #c8ced8; white-space: nowrap; }
.menubar span { padding-top: 1px; }
.menubar u { text-underline-offset: 2px; text-decoration-thickness: 1px; }
.work { display: grid; grid-template-columns: 24px 654px 16px; grid-template-rows: 22px 486px 16px; column-gap: 0; margin-top: 2px; }
.hruler, .vruler, .canvas { font-size: 10px; }
.hruler text, .vruler text { font: 10px "DejaVu Sans", sans-serif; }
.corner, .zoombtn, .qmask { flex: none; border: 1px solid #b4c2d2; border-radius: 3px; background: #eeeaee; display: flex; align-items: center; justify-content: center; }
.corner { width: 21px; height: 22px; }
.zoombtn { width: 15px; height: 16px; margin-left: 2px; }
.sb { display: flex; background: #edf0f6; border: 1px solid #a4b4c6; }
.sb .ar { flex: none; width: 13px; height: 13px; display: flex; align-items: center; justify-content: center; background: linear-gradient(135deg, #fbfcfd, #ccd6e2); }
.sb .off svg { fill: #b4b6ba; }
.sb.v { width: 15px; flex-direction: column; margin-left: 2px; }
.sb.v .thumb { background: linear-gradient(90deg, #a8d2ff, #66b0ff 50%, #a8d0fb); }
.sb.h .thumb { background: linear-gradient(#a8d2ff, #66b0ff 50%, #a8d0fb); }
.sb.v .trough { height: 169px; border-top: 1px solid #a4b4c6; }
.sb.v .thumb { flex: 1; }
.work .sb.v { margin-top: -5px; height: 491px; }
.hrow { grid-column: 1 / 4; display: flex; align-items: center; height: 16px; padding-top: 1px; }
.qmask { width: 16px; height: 15px; }
.sb.main { flex: none; width: 661px; height: 15px; margin: 0 2px 0 2px; }
.sb.main .a { width: 189px; border-left: 1px solid #a4b4c6; }
.sb.main .thumb { flex: 1; }
.sb.main .c { width: 51px; border-right: 1px solid #a4b4c6; }
.status { display: flex; align-items: center; height: 31px; margin-top: 2px; border: 1px solid #c2ccd8; padding-left: 69px; white-space: nowrap; }
.combo { display: flex; flex: none; align-items: center; border: 1px solid #9fb2c6; border-radius: 3px; background: #f1edf1; box-shadow: inset 1px 1px #fff; }
.status .combo svg, .combo.wide svg { margin-left: auto; }
.px-unit { width: 53px; height: 27px; padding: 0 5px 0 5px; }
.pct { width: 82px; height: 27px; margin-left: 4px; padding: 0 5px 0 21px; }
.progress { flex: none; width: 426px; height: 31px; margin-left: 2px; border: 1px solid #9fb2c6; line-height: 29px; letter-spacing: -.1px; background: repeating-linear-gradient(90deg, #edf0f6 0 11px, #dbe1e8 11px 12px); }
.cancel { flex: none; width: 57px; height: 30px; margin-left: 1px; border: 1px solid #9fb2c6; border-radius: 3px; background: #eeeaee; color: #bcb9bd; text-align: center; line-height: 27px; text-shadow: 1px 1px #fff; }

.tool-win { left: 386px; top: 152px; width: 264px; height: 620px; }
.tool-win .title { height: 19px; padding: 0 6px 0 5px; }
.menubar.tm { grid-template-columns: 54px 41px auto; height: 26px; padding: 1px 0 0 13px; border-bottom: 1px solid #c8d2dc; }
.tools { display: grid; grid-template-columns: repeat(8, 32px); grid-auto-rows: 32px; margin-left: 2px; height: 129px; }
.tools i { display: flex; align-items: center; justify-content: center; border: 1px solid transparent; border-radius: 3px; width: 30px; height: 30px; margin: 1px 0 0 1px; }
.tools i svg { width: 21px; height: 21px; }
.tools i svg.mag { width: 24px; height: 24px; }
.tools .on { background: #c2bfc4; border-color: #9fb2c6; outline: 1px dotted #111; outline-offset: -3px; }
.biga { font: bold 27px/28px "DejaVu Sans", sans-serif; color: #222; }
.handle { flex: none; height: 6px; background: linear-gradient(#fff, #f4f2f5 50%, #dbe3ea); border: 1px solid #ccd6de; margin: 0 3px; }
.dock { margin: 1px 3px 0 3px; border: 1px solid #b9c9d6; border-top: 4px solid #66b2ff; border-radius: 3px 3px 0 0; height: 420px; }
.dock-title { display: flex; justify-content: space-between; align-items: center; height: 16px; padding: 0 7px 0 2px; }
.opts { border: 1px solid #ccd8e0; border-bottom: 0; margin: 1px 3px 0 1px; height: 401px; overflow: hidden; white-space: nowrap; }
.modes { display: flex; align-items: center; height: 24px; margin: 4px 0 0 4px; }
.modes span { width: 45px; }
.modes i { width: 24px; height: 24px; margin-right: 2px; border: 1px solid #9fb2c6; border-radius: 3px; background: #f3f0f3; display: flex; align-items: center; justify-content: center; }
.modes .on { background: #c2bfc4; }
.opt { display: flex; align-items: center; height: 18px; }
.cb { flex: none; width: 13px; height: 13px; background: #fff; border: 1px solid #a4b4c6; border-radius: 2px; margin-right: 5px; }
.cb path { fill: none; stroke: #8094ac; stroke-width: 2; }
.o1 { margin: 7px 0 0 6px; }
.o2 { margin: 7px 0 0 6px; }
.o3 { margin: 7px 0 0 4px; }
.o4 { margin: 1px 0 0 22px; letter-spacing: .05px; }
.o5 { margin: 1px 0 0 22px; letter-spacing: .05px; }
.o6 { margin: -1px 0 0 20px; height: 24px; }
.o6 span { flex: none; width: 42px; }
.slider { flex: none; height: 6px; width: 158px; border: 1px solid #a4b4c6; border-radius: 2px; background: repeating-linear-gradient(90deg, #eef1f6 0 15px, #cfd6de 15px 16px); padding-left: 8px; }
.slider .knob { width: 30px; height: 4px; background: #66b0ff; }
.entry { flex: none; width: 60px; height: 23px; margin-left: 4px; border: 1px solid #9fb2c6; background: #fff; padding-left: 3px; line-height: 22px; }

.layer-win { left: 760px; top: 410px; width: 257px; height: 325px; }
.layer-win .title { height: 19px; padding: 0 5px; }
.layer-win h1 { font-size: 12.7px; padding: 1px 1px 0 0; }
.layer-body { display: flex; flex-direction: column; margin: 1px 2px 0 1px; border-left: 1px solid #777; height: 302px; border-right: 1px solid #ccd6de; }
.layer-body .handle { margin: 1px 2px 0; }
.bar { flex: none; height: 4px; background: #66b2ff; border-radius: 3px 3px 0 0; margin: 0 2px; }
.lr { display: flex; flex: none; align-items: center; padding-left: 4px; white-space: nowrap; }
.r0 { height: 16px; justify-content: space-between; padding-right: 6px; }
.r1 { height: 30px; }
.r1 > span { flex: none; width: 74px; }
.combo.wide { width: 170px; height: 27px; margin-top: 1px; padding: 0 5px; }
.r2 { height: 25px; }
.r2 > span { flex: none; width: 76px; }
.slider.full { width: 103px; background: repeating-linear-gradient(90deg, #c6d2de 0 15px, #dce4ec 15px 16px); padding-left: 72px; }
.spin { flex: none; display: flex; width: 62px; height: 24px; margin-left: 3px; border: 1px solid #9fb2c6; background: #fff; border-radius: 2px; }
.spin b { flex: 1; line-height: 22px; padding-left: 3px; }
.spin em { width: 13px; border-left: 1px solid #a4b4c6; }
.spin i { height: 11px; display: flex; align-items: center; justify-content: center; background: #e4e9ef; border-bottom: 1px solid #a4b4c6; }
.spin .off svg { fill: #b4b6ba; }
.r3 { height: 20px; }
.r3 > span { flex: none; width: 76px; }
.listrow { display: flex; flex: none; height: 143px; margin: 2px 0 0 4px; }
.list { flex: none; width: 226px; height: 143px; border: 1px solid #9fb2c6; background: #fff; overflow: hidden; }
.layer { display: flex; align-items: center; height: 32px; white-space: nowrap; }
.layer.sel { background: #abd1ff; }
.layer.bold { font-weight: bold; }
.eye { flex: none; width: 66px; padding-left: 7px; }
.thumb-img { margin-right: 4px; }
.ls.sb.v { height: 143px; margin-left: 3px; }
.ls.sb.v .trough { height: 15px; border-top: 0; border-bottom: 1px solid #a4b4c6; }
.lh { flex: none; width: 226px; height: 15px; margin: 3px 0 0 4px; }
.lh .thumb { flex: 1; }
.lh .trough { width: 18px; border-right: 1px solid #a4b4c6; }
.lbtns { display: flex; flex: none; gap: 2px; margin: 2px 0 0 4px; height: 25px; }
.lbtns i { flex: none; width: 39px; height: 25px; border: 1px solid #9fb2c6; border-radius: 3px; display: flex; align-items: center; justify-content: center; background: #f0ecf0; }
.lbtns svg { margin-right: 2px; }

.panel { position: absolute; left: 0; top: 743px; width: 1024px; height: 25px; background: #eeeaee; border-top: 1px solid #bab7bd; display: flex; align-items: center; overflow: hidden; }
.quick { display: flex; flex: none; align-items: center; gap: 8px; width: 106px; padding-left: 4px; }
.quick svg:nth-child(2) { margin-left: 2px; }
.pager { display: flex; flex: none; height: 25px; }
.pg { position: relative; width: 33px; height: 25px; background: #c4c1c5; border-right: 1px solid #ece8ec; }
.pg.cur { background: #fff; }
.mini { position: absolute; left: 1px; top: 3px; width: 28px; height: 20px; border: 1px solid #444; background: #e6f1ff; display: flex; align-items: center; justify-content: center; }
.m2 { height: 18px; background: #fff; width: 21px; }
.m3 { position: absolute; left: 23px; top: 15px; width: 7px; height: 8px; border: 1px solid #333; background: #fff; }
.m4 { border-left-width: 1px; justify-content: flex-end; background: linear-gradient(90deg, #f4d0b0 0 8px, #444 8px 9px, #e6f1ff 9px); }
.pg b { position: absolute; left: 0; top: 4px; width: 30px; text-align: center; font-size: 12.500px; }
.trm { margin-left: 3px; }
.klip { margin-left: 15px; }
.k { font: bold 11px "DejaVu Sans", sans-serif; text-anchor: middle; fill: #888; }
.up { margin-left: 15px; }
.tasks { display: flex; flex: none; height: 25px; margin-left: 3px; border-left: 1px solid #bbb; }
.task { display: flex; flex: none; align-items: center; overflow: hidden; white-space: nowrap; padding-left: 4px; }
.task svg { margin-right: 3px; }
.task span { overflow: hidden; width: 26px; background: linear-gradient(90deg, #333 30%, #e0dce0); -webkit-background-clip: text; background-clip: text; color: transparent; }
.task.on { background: #b0d4ff; padding-left: 2px; }
.task.on span { background-image: linear-gradient(90deg, #223 60%, #9ab8dc); }
.tray { margin-left: 2px; }
.clock { margin-left: 21px; }
.clock text { font: 26px "Liberation Sans", sans-serif; stroke: #000; stroke-width: .5px; }
.hide { margin-left: 8px; }
</style>
